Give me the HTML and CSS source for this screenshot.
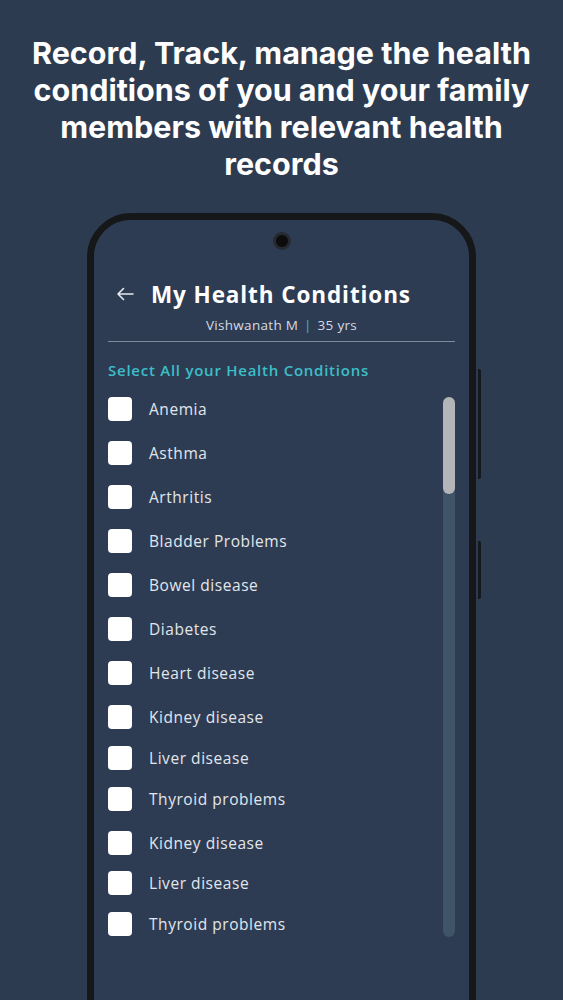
FILE: index.html
```html
<!DOCTYPE html>
<html lang="en">
<head>
    <meta charset="UTF-8" />
    <meta name="viewport" content="width=device-width, initial-scale=1" />
    <title>My Health Conditions</title>
    <link rel="stylesheet" href="styles.css">
</head>
<body>
<h1 class="promo">Record, Track, manage the health conditions of you and your family members with relevant health records</h1>

<div class="phone">
    <span class="side-btn side-btn-top"></span>
    <span class="side-btn side-btn-bottom"></span>
    <div class="screen">
        <div class="camera"></div>

        <div class="header">
            <svg class="back" width="18" height="14" viewBox="0 0 18 14">
                <path d="M17 7H2M7.5 1.5L2 7l5.5 5.5" fill="none" stroke="#e6e9ee" stroke-width="1.6" stroke-linecap="round" stroke-linejoin="round"/>
            </svg>
            <h2>My Health Conditions</h2>
        </div>
        <p class="member">Vishwanath M <span class="sep">|</span> 35 yrs</p>
        <hr class="divider" />

        <p class="section-title">Select All your Health Conditions</p>

        <div class="scroll-area">
            <ul class="conditions">
                <li><span class="box"></span>Anemia</li>
                <li><span class="box"></span>Asthma</li>
                <li><span class="box"></span>Arthritis</li>
                <li><span class="box"></span>Bladder Problems</li>
                <li><span class="box"></span>Bowel disease</li>
                <li><span class="box"></span>Diabetes</li>
                <li><span class="box"></span>Heart disease</li>
                <li><span class="box"></span>Kidney disease</li>
                <li class="tight"><span class="box"></span>Liver disease</li>
                <li class="tight"><span class="box"></span>Thyroid problems</li>
                <li><span class="box"></span>Kidney disease</li>
                <li class="tighter"><span class="box"></span>Liver disease</li>
                <li class="tight"><span class="box"></span>Thyroid problems</li>
            </ul>
            <div class="scrollbar"><div class="thumb"></div></div>
        </div>
    </div>
</div>
</body>
</html>
```

FILE: styles.css
```css
html, body {
    height: 1000px;
    overflow: hidden;
}
body {
    margin: 0;
    background-color: #2c3b50;
    font-family: 'Open Sans', sans-serif;
    color: #fff;
}
.promo {
    font-family: 'Inter', sans-serif;
    font-weight: 700;
    font-size: 30.5px;
    line-height: 37px;
    text-align: center;
    margin: 0;
    padding: 34px 22px 0;
}
.phone {
    position: relative;
    width: 375px;
    height: 820px;
    margin: 31px auto 0;
    border: 7.5px solid #161719;
    border-radius: 44px;
}
.side-btn {
    position: absolute;
    left: 384px;
    width: 3px;
    background: #15181c;
    border-radius: 0 2px 2px 0;
}
.side-btn-top {
    top: 149px;
    height: 110px;
}
.side-btn-bottom {
    top: 321px;
    height: 58px;
}
.screen {
    height: 100%;
    background-color: #2d3c52;
    border-radius: 37px;
    padding: 12px 14px 0;
    box-sizing: border-box;
}
.camera {
    width: 12px;
    height: 12px;
    margin: 3px auto 0;
    border-radius: 50%;
    background: #0c0c0d;
    box-shadow: 0 0 0 3px #262a30;
}
.header {
    display: flex;
    align-items: center;
    height: 30px;
    margin-top: 32px;
    padding-left: 8px;
}
.back {
    margin-right: 17px;
}
.header h2 {
    margin: 0;
    font-size: 22.5px;
    font-weight: 700;
    letter-spacing: 0.9px;
    color: #fff;
}
.member {
    margin: 7px 0 0;
    text-align: center;
    font-size: 13.5px;
    line-height: 18px;
    letter-spacing: 0.3px;
    color: #d5dae2;
}
.sep {
    color: #3bb8c4;
    margin: 0 2px;
}
.divider {
    margin: 7px 0 0;
    border: none;
    height: 1px;
    background: #7d8a9a;
}
.section-title {
    margin: 18px 0 0;
    font-size: 15px;
    font-weight: 600;
    line-height: 20px;
    letter-spacing: 0.75px;
    color: #3cbec8;
}
.scroll-area {
    display: flex;
    margin-top: 7px;
}
.conditions {
    flex: 1;
    list-style: none;
    margin: 0;
    padding: 0;
}
.conditions li {
    display: flex;
    align-items: center;
    height: 24px;
    margin-top: 20px;
    font-size: 15.5px;
    color: #e2e6ec;
    letter-spacing: 0.55px;
}
.conditions li:first-child {
    margin-top: 10px;
}
.conditions li.tight {
    margin-top: 17px;
}
.conditions li.tighter {
    margin-top: 16px;
}
.box {
    width: 24px;
    height: 24px;
    background: #fff;
    border-radius: 4px;
    margin-right: 17px;
    flex-shrink: 0;
}
.scrollbar {
    width: 12px;
    height: 540px;
    margin-top: 10px;
    background: #405468;
    border-radius: 6px;
}
.thumb {
    height: 97px;
    background: #b3b5b9;
    border-radius: 6px;
}
```
